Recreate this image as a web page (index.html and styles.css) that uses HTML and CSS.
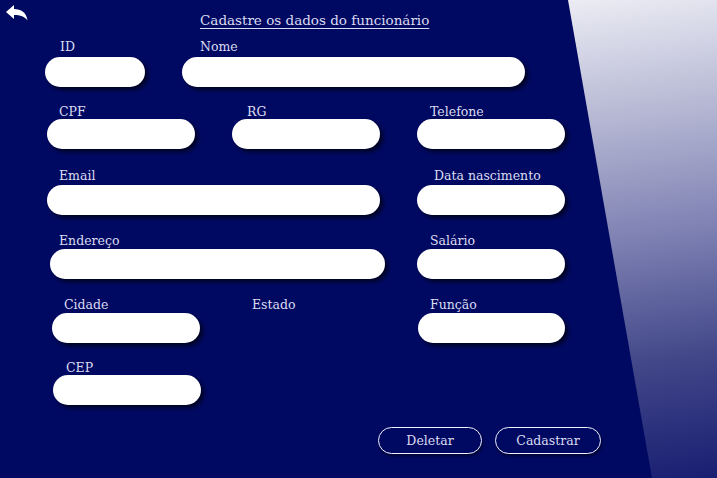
FILE: index.html
```html
<!DOCTYPE html>
<html lang="pt-BR">
<head>
<meta charset="utf-8">
<title>Cadastro de funcionário</title>
<link rel="stylesheet" href="styles.css">
</head>
<body>
<div class="page">
  <main class="form">
    <header class="top">
      <button class="back" aria-label="Voltar">
        <svg width="22" height="16" viewBox="0 0 22 16"><path d="M0 7 L8 0 L8 4 C15 4 20.5 7.5 21.5 15.5 C18.5 11.5 14.5 10 8 10 L8 14 Z" fill="#fff"/></svg>
      </button>
      <h1 class="title">Cadastre os dados do funcionário</h1>
    </header>

    <div class="row r1">
      <div class="field f-id"><label class="pl15">ID</label><input class="input"></div>
      <div class="field f-nome"><label class="pl18">Nome</label><input class="input"></div>
    </div>

    <div class="row r2">
      <div class="field f-cpf"><label class="pl12">CPF</label><input class="input"></div>
      <div class="field f-rg"><label class="pl15">RG</label><input class="input"></div>
      <div class="field f-tel"><label>Telefone</label><input class="input"></div>
    </div>

    <div class="row r3">
      <div class="field f-email"><label class="pl12">Email</label><input class="input"></div>
      <div class="field f-data"><label class="pl17">Data nascimento</label><input class="input"></div>
    </div>

    <div class="row r4">
      <div class="field f-end"><label class="pl9">Endereço</label><input class="input"></div>
      <div class="field f-sal"><label>Salário</label><input class="input"></div>
    </div>

    <div class="row r5">
      <div class="field f-cid"><label class="pl12">Cidade</label><input class="input"></div>
      <div class="field f-est"><label>Estado</label></div>
      <div class="field f-fun"><label class="pl12">Função</label><input class="input"></div>
    </div>

    <div class="row r6">
      <div class="field f-cep"><label>CEP</label><input class="input"></div>
    </div>

    <div class="actions">
      <button class="btn btn-del">Deletar</button>
      <button class="btn btn-cad">Cadastrar</button>
    </div>
  </main>
  <aside class="side"></aside>
</div>
</body>
</html>
```

FILE: styles.css
```css
* { box-sizing: border-box; }
html, body { margin: 0; padding: 0; }
body {
  width: 717px;
  height: 478px;
  overflow: hidden;
  background: #000962;
  font-family: "DejaVu Serif", "Liberation Serif", serif;
  color: #dcdcf0;
}
.page {
  display: flex;
  height: 478px;
}
.form {
  width: 568px;
  flex: none;
  display: flex;
  flex-direction: column;
}
.side {
  flex: 1;
  background: linear-gradient(172deg, #ececf4 0%, #b5b7d3 25%, #7d80b2 50%, #424789 75%, #191e72 100%);
  clip-path: polygon(0 0, 100% 0, 100% 100%, 84px 100%);
}
.top {
  display: flex;
  align-items: flex-start;
  height: 39px;
}
.back {
  background: none;
  border: 0;
  padding: 0;
  margin: 5px 0 0 6px;
  width: 22px;
  height: 16px;
  display: block;
  flex: none;
}
.back svg { display: block; }
.title {
  margin: 10px 0 0 172px;
  font-size: 13.5px;
  font-weight: normal;
  text-decoration: underline;
  text-underline-offset: 3px;
  text-decoration-thickness: 1px;
  line-height: 21px;
  color: #dcdcf0;
  white-space: nowrap;
}
.row {
  display: flex;
  align-items: flex-start;
}
.field {
  display: flex;
  flex-direction: column;
  flex: none;
}
.field label {
  font-size: 12.5px;
  line-height: 14px;
  height: 14px;
  padding-left: 13px;
  margin-bottom: 1px;
  white-space: nowrap;
}
.pl9 { padding-left: 9px !important; }
.pl12 { padding-left: 12px !important; }
.pl15 { padding-left: 15px !important; }
.pl17 { padding-left: 17px !important; }
.pl18 { padding-left: 18px !important; }
.input {
  height: 30px;
  border: 0;
  border-radius: 15px;
  background: #fff;
  box-shadow: 3px 3px 4px rgba(0, 0, 0, 0.65);
  outline: none;
  width: 100%;
  padding: 0 14px;
}

.r1 { margin-top: 1px; }
.r1 label { margin-bottom: 3px; }
.r2 { margin-top: 18px; }
.r2 label { margin-bottom: 0; }
.r3 { margin-top: 20px; }
.r3 label { margin-bottom: 2px; }
.r4 { margin-top: 19px; }
.r5 { margin-top: 19px; }
.r6 { margin-top: 18px; }
.r6 label { margin-bottom: 0; }

.f-id { margin-left: 45px; width: 100px; }
.f-nome { margin-left: 37px; width: 343px; }
.f-cpf { margin-left: 47px; width: 148px; }
.f-rg { margin-left: 37px; width: 148px; }
.f-tel { margin-left: 37px; width: 148px; }
.f-email { margin-left: 47px; width: 333px; }
.f-data { margin-left: 37px; width: 148px; }
.f-end { margin-left: 50px; width: 335px; }
.f-sal { margin-left: 32px; width: 148px; }
.f-cid { margin-left: 52px; width: 148px; }
.f-est { margin-left: 39px; width: 179px; }
.f-fun { width: 147px; }
.f-cep { margin-left: 53px; width: 148px; }

.actions {
  display: flex;
  margin-top: 22px;
  margin-left: 378px;
  gap: 13px;
}
.btn {
  flex: none;
  height: 27px;
  border: 1px solid #f0f0ff;
  border-radius: 14px;
  background: transparent;
  color: #dcdcf0;
  font-family: "DejaVu Serif", "Liberation Serif", serif;
  font-size: 12.5px;
  padding: 0;
  box-shadow: 1px 2px 3px rgba(0, 0, 0, 0.5);
}
.btn-del { width: 104px; }
.btn-cad { width: 106px; }
```
